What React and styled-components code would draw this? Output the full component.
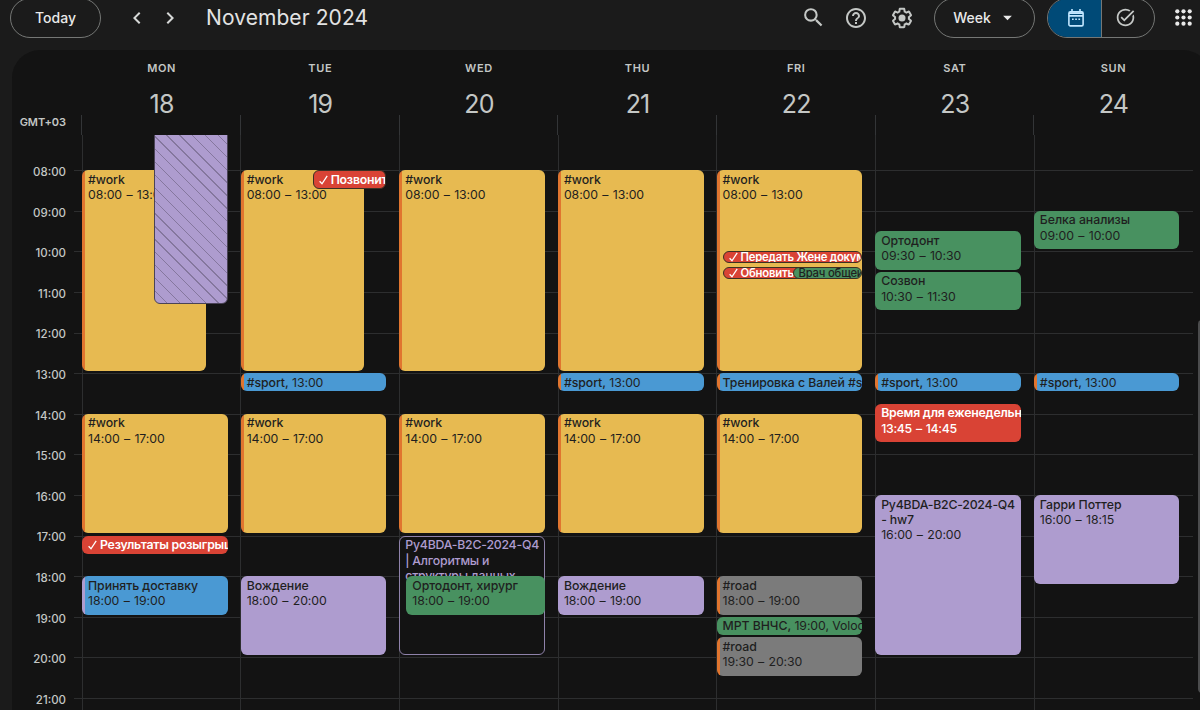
import React from 'react'
import styled, { createGlobalStyle, css } from 'styled-components'
import {
  MdArrowDropDown,
  MdChevronLeft,
  MdChevronRight,
  MdHelpOutline,
  MdSearch,
  MdTaskAlt
} from 'react-icons/md'

const HOUR = 40.6
const FIRST_HOUR = 7

const GlobalStyle = createGlobalStyle`
  * {
    box-sizing: border-box;
  }
  body {
    margin: 0;
    background: #1b1b1b;
    color: #e3e3e3;
    font-family: Inter, 'Liberation Sans', sans-serif;
    overflow: hidden;
  }
`

const Page = styled.div`
  width: 1200px;
  height: 710px;
  display: flex;
  flex-direction: column;
  overflow: hidden;
`

const TopBar = styled.header`
  height: 50px;
  flex: none;
  display: flex;
  align-items: center;
  padding: 0 8px 15px 10px;
`

const Pill = styled.button`
  height: 40px;
  flex: none;
  display: flex;
  align-items: center;
  justify-content: center;
  padding: 0;
  width: ${props => props.$width}px;
  border: 1px solid #757775;
  border-radius: 20px;
  background: transparent;
  color: #e9e9e9;
  font-family: inherit;
  font-size: 14px;
  font-weight: 500;
`

const Arrows = styled.div`
  display: flex;
  gap: 9px;
  margin-left: 24px;
  color: #d6d8d7;
  font-size: 24px;

  svg {
    display: block;
  }
`

const Month = styled.h1`
  flex: 1;
  margin: 0 0 0 24px;
  font-size: 21px;
  font-weight: 400;
  letter-spacing: 0.08px;
  color: #e3e3e3;
`

const Tools = styled.div`
  display: flex;
  align-items: center;
  gap: 22px;
  margin-right: 20px;
  color: #c4c7c5;

  svg {
    display: block;
  }
  svg:first-child {
    margin-right: -4px;
  }
`

const WeekPill = styled(Pill)`
  gap: 6px;
  padding-left: 2px;

  svg {
    font-size: 21px;
  }
`

const Toggle = styled.div`
  display: flex;
  flex: none;
  width: 108px;
  height: 40px;
  margin: 0 20px 0 12px;
  border: 1px solid #757775;
  border-radius: 20px;
  overflow: hidden;
`

const ToggleHalf = styled.div`
  width: 53px;
  display: flex;
  align-items: center;
  justify-content: center;
  padding-left: 3px;
  background: ${props => (props.$active ? '#004a77' : 'transparent')};
  color: ${props => (props.$active ? '#c2e7ff' : '#c4c7c5')};

  & + & {
    border-left: 1px solid #757775;
    padding: 0 5px 0 0;
  }
`

const Panel = styled.main`
  position: relative;
  width: 1199px;
  flex: 1;
  min-height: 0;
  margin-left: 12px;
  padding-right: 18px;
  border-radius: 28px 28px 0 0;
  background: #131313;
  display: flex;
  flex-direction: column;
  overflow: hidden;
`

const WeekHead = styled.div`
  height: 85px;
  flex: none;
  display: grid;
  grid-template-columns: 69.3px repeat(7, 158.65px);
`

const Zone = styled.div`
  align-self: end;
  padding: 0 15.5px 6px 0;
  text-align: right;
  font-size: 11px;
  font-weight: 600;
  letter-spacing: -0.1px;
  color: #c4c7c5;
`

const DayHead = styled.div`
  display: flex;
  flex-direction: column;
  align-items: center;
  padding: 11px 0 0 2px;
  color: #c4c7c5;
  background: linear-gradient(#333537, #333537) left bottom / 1px 20px no-repeat;
`

const DayName = styled.div`
  font-size: 11px;
  line-height: 14px;
  font-weight: 600;
  letter-spacing: 0.6px;
`

const DayNumber = styled.div`
  margin-top: 13px;
  font-size: 25px;
  line-height: 32px;
  letter-spacing: -0.8px;
`

const Body = styled.div`
  flex: 1;
  min-height: 0;
  display: grid;
  grid-template: 1fr / 1fr;
  overflow: hidden;

  > * {
    grid-area: 1 / 1;
    margin-top: -5.4px;
  }
`

const Lines = styled.div`
  padding-left: 62px;
`

const Line = styled.div`
  height: ${HOUR}px;
  border-top: 1px solid #2d2e2f;
`

const Hours = styled.div`
  width: 54px;
  padding-top: 34.4px;
`

const Hour = styled.div`
  height: ${HOUR}px;
  line-height: 16px;
  text-align: right;
  font-size: 11.5px;
  font-weight: 500;
  color: #c4c7c5;
`

const Days = styled.div`
  display: grid;
  grid-template-columns: repeat(7, 158.65px);
  padding-left: 69.8px;
`

const Day = styled.div`
  display: grid;
  grid-template: 1fr / 1fr;
  border-left: 1px solid #2d2e2f;
  min-width: 0;
`

const tones = {
  yellow: { bg: '#e7ba51', text: '#1f1f1f' },
  purple: { bg: '#ae9ccf', text: '#1f1f1f' },
  blue: { bg: '#4a99d3', text: '#1f1f1f' },
  green: { bg: '#489160', text: '#1f1f1f' },
  grey: { bg: '#7b7b7b', text: '#1f1f1f' },
  red: { bg: '#d94335', text: '#ffffff' }
}

// every event shares the one cell of its day, its time gives the offset
const Event = styled.div`
  grid-area: 1 / 1;
  align-self: start;
  margin-top: ${props => (props.$start - FIRST_HOUR) * HOUR}px;
  margin-left: ${props => props.$left - 0.8}px;
  width: ${props => props.$width - 0.4}px;
  height: ${props => props.$height}px;
  padding: 1.6px 0 0 6px;
  border-radius: 6px;
  overflow: hidden;
  white-space: nowrap;
  background: ${props => tones[props.$tone].bg};
  color: ${props => tones[props.$tone].text};
  font-size: 12.3px;
  line-height: 15.4px;
  font-weight: 400;

  ${props => props.$stripe && css`
    background: linear-gradient(90deg, ${props.$stripe} 3px, ${tones[props.$tone].bg} 3px);
  `}
  ${props => props.$tone === 'red' && css`
    font-weight: 500;
  `}
  ${props => props.$over && css`
    border: 1px solid #3a3024;
    padding: 1px 0 0 5px;
  `}
  ${props => props.$small && css`
    padding-top: 0;
    font-size: 11.3px;
    line-height: 10px;
  `}
  ${props => props.$hatched && css`
    border: 1px solid #4a4356;
    background: repeating-linear-gradient(
      45deg,
      ${tones.purple.bg} 0 8.1px,
      #85779e 8.1px 9.1px
    );
  `}
  ${props => props.$outlined && css`
    border: 1px solid #8f82aa;
    padding: 0.6px 0 0 5px;
    background: #131313;
    color: ${tones.purple.bg};
  `}
`

const Title = styled.span`
  display: ${props => (props.$inline ? 'inline' : 'block')};
  white-space: pre;
  font-weight: ${props => (props.$bold ? 600 : 500)};
  letter-spacing: ${props => (props.$tight ? '-0.22px' : '-0.06px')};
`

const Time = styled.span`
  word-spacing: ${props => (props.$inline ? 0 : '1px')};
  letter-spacing: ${props => (props.$tight ? '-0.3px' : '-0.08px')};
`

const Tick = styled.svg`
  width: 9px;
  height: 10px;
  margin: 0 3px 0 0;
  vertical-align: -1px;
`

const Thumb = styled.div`
  position: absolute;
  left: 1185.5px;
  top: 270px;
  width: 8px;
  height: 373px;
  border-radius: 4px;
  background: #4b4c4d;
`

const work = [
  { title: '#work', time: '08:00 – 13:00', start: 8, end: 13, tone: 'yellow', stripe: '#e0752f' },
  { title: '#work', time: '14:00 – 17:00', start: 14, end: 17, tone: 'yellow', stripe: '#e0752f' }
]
const workNarrow = [{ ...work[0], width: 124 }, work[1]]
const sport = { title: '#sport,', time: ' 13:00', start: 13, end: 13.5, tone: 'blue', stripe: '#e0752f', inline: true }

const week = [
  {
    name: 'MON',
    number: 18,
    events: [
      ...workNarrow,
      { start: 6.5, end: 11.34, tone: 'purple', hatched: true, left: 72, width: 74 },
      { title: 'Результаты розыгрыша', start: 17, end: 17.5, tone: 'red', done: true, inline: true, tight: true },
      { title: 'Принять доставку', time: '18:00 – 19:00', start: 18, end: 19, tone: 'blue', stripe: '#ae9ccf' }
    ]
  },
  {
    name: 'TUE',
    number: 19,
    events: [
      ...workNarrow,
      { title: 'Позвонить', start: 8, end: 8.52, tone: 'red', done: true, inline: true, over: true, tight: true, left: 72, width: 74 },
      sport,
      { title: 'Вождение', time: '18:00 – 20:00', start: 18, end: 20, tone: 'purple' }
    ]
  },
  {
    name: 'WED',
    number: 20,
    events: [
      ...work,
      { title: 'Py4BDA-B2C-2024-Q4\n| Алгоритмы и\nструктуры данных', start: 17, end: 20, tone: 'purple', outlined: true, tight: true },
      { title: 'Ортодонт, хирург', time: '18:00 – 19:00', start: 18, end: 19, tone: 'green', left: 7, width: 139 }
    ]
  },
  {
    name: 'THU',
    number: 21,
    events: [
      ...work,
      sport,
      { title: 'Вождение', time: '18:00 – 19:00', start: 18, end: 19, tone: 'purple' }
    ]
  },
  {
    name: 'FRI',
    number: 22,
    events: [
      ...work,
      { title: 'Передать Жене документы', start: 10, end: 10.34, tone: 'red', done: true, inline: true, over: true, small: true, tight: true, left: 6, width: 140 },
      { title: 'Обновить', start: 10.39, end: 10.73, tone: 'red', done: true, inline: true, over: true, small: true, tight: true, left: 6, width: 100 },
      { title: 'Врач общей практики', start: 10.39, end: 10.73, tone: 'green', inline: true, over: true, small: true, tight: true, left: 76, width: 70 },
      { ...sport, title: 'Тренировка с Валей #sport,' },
      { title: '#road', time: '18:00 – 19:00', start: 18, end: 19, tone: 'grey', stripe: '#e0752f' },
      { title: 'МРТ ВНЧС,', time: ' 19:00, Volochaevskaya', start: 19, end: 19.5, tone: 'green', inline: true },
      { title: '#road', time: '19:30 – 20:30', start: 19.5, end: 20.5, tone: 'grey', stripe: '#e0752f' }
    ]
  },
  {
    name: 'SAT',
    number: 23,
    events: [
      { title: 'Ортодонт', time: '09:30 – 10:30', start: 9.5, end: 10.5, tone: 'green' },
      { title: 'Созвон', time: '10:30 – 11:30', start: 10.5, end: 11.5, tone: 'green' },
      sport,
      { title: 'Время для еженедельного', time: '13:45 – 14:45', start: 13.75, end: 14.75, tone: 'red', tight: true },
      { title: 'Py4BDA-B2C-2024-Q4\n- hw7', time: '16:00 – 20:00', start: 16, end: 20, tone: 'purple', tight: true }
    ]
  },
  {
    name: 'SUN',
    number: 24,
    events: [
      { title: 'Белка анализы', time: '09:00 – 10:00', start: 9, end: 10, tone: 'green' },
      sport,
      { title: 'Гарри Поттер', time: '16:00 – 18:15', start: 16, end: 18.25, tone: 'purple' }
    ]
  }
]

const hours = Array.from({ length: 14 }, (_, i) => i + FIRST_HOUR + 1)

const SettingsIcon = () => (
  <svg width='24' height='24' viewBox='0 0 24 24' fill='currentColor'>
    <path d='M13.85 22.25h-3.7c-.74 0-1.36-.54-1.45-1.27l-.27-1.89c-.27-.14-.53-.29-.79-.46l-1.8.72c-.7.26-1.47-.03-1.81-.65L2.2 15.53c-.35-.66-.2-1.44.36-1.88l1.53-1.19c-.01-.15-.02-.3-.02-.46 0-.15.01-.31.02-.46l-1.52-1.19c-.59-.45-.74-1.26-.37-1.88l1.85-3.19c.34-.62 1.11-.9 1.79-.63l1.81.73c.26-.17.52-.32.78-.46l.27-1.91c.09-.7.71-1.25 1.44-1.25h3.7c.74 0 1.36.54 1.45 1.27l.27 1.89c.27.14.53.29.79.46l1.8-.72c.71-.26 1.48.03 1.82.65l1.84 3.18c.36.66.2 1.44-.36 1.88l-1.52 1.19c.01.15.02.3.02.46s-.01.31-.02.46l1.52 1.19c.56.45.72 1.23.37 1.86l-1.86 3.22c-.34.62-1.11.9-1.8.63l-1.8-.72c-.26.17-.52.32-.78.46l-.27 1.91c-.1.68-.72 1.22-1.46 1.22zm-3.23-2h2.76l.37-2.55.53-.22c.44-.18.88-.44 1.34-.78l.45-.34 2.38.96 1.38-2.4-2.03-1.58.07-.56c.03-.26.06-.51.06-.78s-.03-.53-.06-.78l-.07-.56 2.03-1.58-1.39-2.4-2.39.96-.45-.35c-.42-.32-.87-.58-1.33-.77l-.52-.22-.37-2.55h-2.76l-.37 2.55-.53.21c-.44.19-.88.44-1.34.79l-.45.33-2.38-.95-1.39 2.39 2.03 1.58-.07.56a7 7 0 0 0-.06.79c0 .26.02.53.06.78l.07.56-2.03 1.58 1.38 2.4 2.39-.96.45.35c.43.33.86.58 1.33.77l.53.22.38 2.55z' />
    <circle cx='12' cy='12' r='3.5' />
  </svg>
)

const CalendarIcon = () => (
  <svg width='16' height='18' viewBox='0 0 16 18' fill='none' stroke='currentColor' strokeWidth='1.6'>
    <rect x='0.9' y='2.9' width='14.2' height='14' rx='1.4' />
    <path d='M1 4.1h14M1 6.9h14M4 0v3M12 0v3' />
    <path d='M4 10.2h1.7M7.2 10.2h1.7M10.4 10.2h1.7' />
  </svg>
)

const AppsIcon = () => (
  <svg width='17' height='17' viewBox='0 0 17 17' fill='#e9e9e9'>
    {[2.3, 8.5, 14.7].map(y =>
      [2.3, 8.5, 14.7].map(x => <circle key={`${x}-${y}`} cx={x} cy={y} r='2.1' />)
    )}
  </svg>
)

const CalendarEvent = ({ event }) => (
  <Event
    $start={event.start}
    $height={(event.end - event.start) * HOUR - 2.2}
    $left={event.left || 0}
    $width={event.width || 146}
    $tone={event.tone}
    $stripe={event.stripe}
    $over={event.over}
    $small={event.small}
    $hatched={event.hatched}
    $outlined={event.outlined}
  >
    {event.done && (
      <Tick viewBox='0 0 9 10' fill='none' stroke='currentColor' strokeWidth='1.3'>
        <path d='M0.6 6.2L3 8.8L8.2 0.8' />
      </Tick>
    )}
    {event.title && (
      <Title $inline={event.inline} $bold={event.tone === 'red'} $tight={event.tight}>
        {event.title}
      </Title>
    )}
    {event.time && (
      <Time $inline={event.inline} $tight={event.tone === 'red'}>{event.time}</Time>
    )}
  </Event>
)

class App extends React.Component {
  render() {
    return (
      <Page>
        <GlobalStyle />
        <TopBar>
          <Pill $width={91}>Today</Pill>
          <Arrows>
            <MdChevronLeft />
            <MdChevronRight />
          </Arrows>
          <Month>November 2024</Month>
          <Tools>
            <MdSearch size={25} />
            <MdHelpOutline size={24} />
            <SettingsIcon />
          </Tools>
          <WeekPill $width={101}>
            Week
            <MdArrowDropDown />
          </WeekPill>
          <Toggle>
            <ToggleHalf $active>
              <CalendarIcon />
            </ToggleHalf>
            <ToggleHalf>
              <MdTaskAlt size={21} />
            </ToggleHalf>
          </Toggle>
          <AppsIcon />
        </TopBar>
        <Panel>
          <WeekHead>
            <Zone>GMT+03</Zone>
            {week.map(day => (
              <DayHead key={day.name}>
                <DayName>{day.name}</DayName>
                <DayNumber>{day.number}</DayNumber>
              </DayHead>
            ))}
          </WeekHead>
          <Body>
            <Lines>
              <Line style={{ visibility: 'hidden' }} />
              {hours.map(hour => <Line key={hour} />)}
            </Lines>
            <Hours>
              {hours.map(hour => (
                <Hour key={hour}>{String(hour).padStart(2, '0')}:00</Hour>
              ))}
            </Hours>
            <Days>
              {week.map(day => (
                <Day key={day.name}>
                  {day.events.map((event, i) => <CalendarEvent key={i} event={event} />)}
                </Day>
              ))}
            </Days>
          </Body>
          <Thumb />
        </Panel>
      </Page>
    )
  }
}

export default App
